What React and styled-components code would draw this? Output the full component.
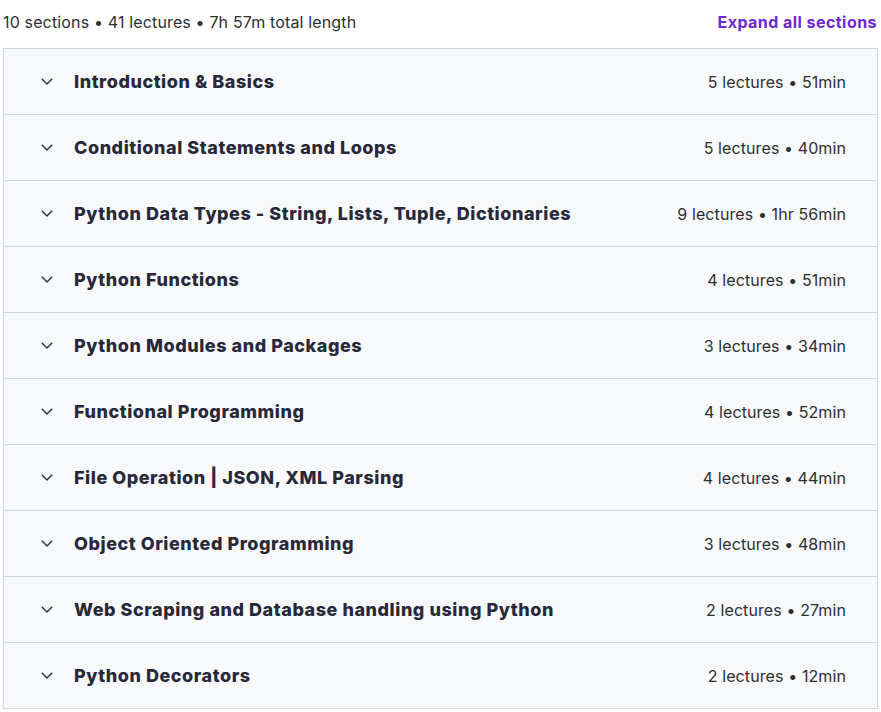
import React from 'react';
import styled, { createGlobalStyle } from 'styled-components';

const GlobalStyle = createGlobalStyle`
  body {
    margin: 0;
    background: #fff;
    font-family: Inter, "Noto Sans", sans-serif;
    color: #2d2f31;
  }
`;

const Page = styled.div`
  padding: 0 3px;
`;

const Header = styled.div`
  display: flex;
  align-items: center;
  justify-content: space-between;
  height: 43px;
  margin-bottom: 5px;
`;

const Summary = styled.span`
  font-size: 16px;
  color: #2d2f31;
  letter-spacing: 0.15px;
`;

const ExpandLink = styled.button`
  border: 0;
  background: none;
  padding: 0;
  margin-right: 1px;
  font-family: inherit;
  font-size: 16px;
  font-weight: 700;
  color: #6d28d2;
  letter-spacing: 0.45px;
  cursor: pointer;
`;

const List = styled.div`
  border: 1px solid #d1d7dc;
  border-bottom: 0;
`;

const Row = styled.div`
  display: flex;
  align-items: center;
  height: 65px;
  padding: 0 31px 0 36px;
  background: #f7f9fa;
  border-bottom: 1px solid #d1d7dc;
`;

const Chevron = styled.span`
  display: flex;
  align-items: center;
  justify-content: center;
  width: 14px;
  height: 14px;
  margin-right: 20px;
  color: #2d2f31;
`;

const Title = styled.span`
  flex: 1;
  font-size: 18px;
  font-weight: 800;
  letter-spacing: 0.55px;
  color: #272839;
`;

const Meta = styled.span`
  font-size: 16px;
  color: #2d2f31;
  letter-spacing: 0.1px;
`;

const sections = [
  ['Introduction & Basics', '5 lectures • 51min'],
  ['Conditional Statements and Loops', '5 lectures • 40min'],
  ['Python Data Types - String, Lists, Tuple, Dictionaries', '9 lectures • 1hr 56min'],
  ['Python Functions', '4 lectures • 51min'],
  ['Python Modules and Packages', '3 lectures • 34min'],
  ['Functional Programming', '4 lectures • 52min'],
  ['File Operation | JSON, XML Parsing', '4 lectures • 44min'],
  ['Object Oriented Programming', '3 lectures • 48min'],
  ['Web Scraping and Database handling using Python', '2 lectures • 27min'],
  ['Python Decorators', '2 lectures • 12min'],
];

export default function App() {
  return (
    <Page>
      <GlobalStyle />
      <Header>
        <Summary>10 sections • 41 lectures • 7h 57m total length</Summary>
        <ExpandLink type="button">Expand all sections</ExpandLink>
      </Header>
      <List>
        {sections.map(([title, meta]) => (
          <Row key={title}>
            <Chevron>
              <svg width="12" height="7" viewBox="0 0 12 7" fill="none">
                <path d="M0.8 0.8L6 6L11.2 0.8" stroke="currentColor" strokeWidth="1.4" />
              </svg>
            </Chevron>
            <Title>{title}</Title>
            <Meta>{meta}</Meta>
          </Row>
        ))}
      </List>
    </Page>
  );
}
